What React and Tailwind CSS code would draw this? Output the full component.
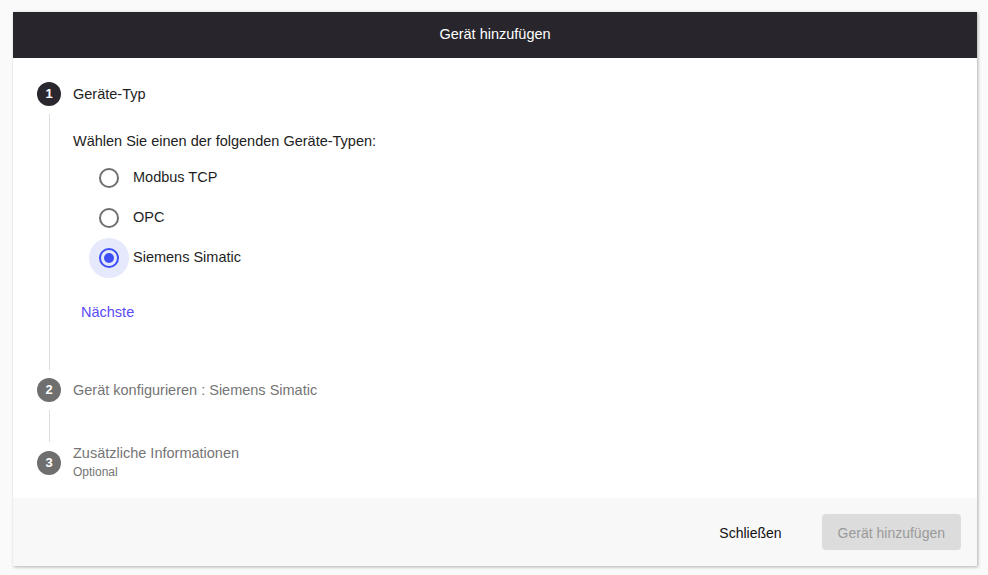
import { useState } from "react";

const deviceTypes = ["Modbus TCP", "OPC", "Siemens Simatic"];

function StepCircle({ n, active }) {
  return (
    <div
      className={`flex h-6 w-6 shrink-0 items-center justify-center rounded-full text-[13px] font-bold text-white ${
        active ? "bg-[#2a272e]" : "bg-[#6f6f6f]"
      }`}
    >
      {n}
    </div>
  );
}

function Radio({ label, checked, onSelect }) {
  return (
    <label className="flex h-10 cursor-pointer items-center" onClick={onSelect}>
      <span
        className={`flex h-10 w-10 items-center justify-center rounded-full ${
          checked ? "bg-[#e6e8fb]" : ""
        }`}
      >
        <span
          className={`flex h-5 w-5 items-center justify-center rounded-full border-2 ${
            checked ? "border-[#3d4ef5]" : "border-[#6f6f6f]"
          }`}
        >
          {checked && <span className="h-2.5 w-2.5 rounded-full bg-[#3d4ef5]" />}
        </span>
      </span>
      <span className="ml-1 text-[14.5px] text-[#1f1f1f]">{label}</span>
    </label>
  );
}

export default function App() {
  const [type, setType] = useState("Siemens Simatic");

  return (
    <div
      className="min-h-[575px] bg-[#fafafa] pl-[13px] pr-[11px] pt-3"
      style={{ fontFamily: '"Liberation Sans", Arial, sans-serif' }}
    >
      <div className="flex flex-col bg-white shadow-[1px_1px_3px_rgba(0,0,0,0.3)]">
        <div className="flex h-[46px] items-center justify-center bg-[#28262c] text-[14.5px] text-white">
          Gerät hinzufügen
        </div>

        <div className="px-6">
          {/* step 1 */}
          <div className="flex h-[72px] items-center gap-3">
            <StepCircle n={1} active />
            <span className="pt-0.5 text-[14.5px] text-[#222]">Geräte-Typ</span>
          </div>
          <div className="relative ml-3 pb-6 pl-6">
            <div className="absolute -bottom-4 -top-4 left-0 border-l border-[#dcdcdc]" />
            <p className="pt-px text-[14.5px] leading-5 text-[#222]">
              Wählen Sie einen der folgenden Geräte-Typen:
            </p>
            <div className="ml-4 mt-[7px] flex flex-col">
              {deviceTypes.map((t) => (
                <Radio key={t} label={t} checked={type === t} onSelect={() => setType(t)} />
              ))}
            </div>
            <button className="mt-4 h-9 rounded px-2 pt-0.5 text-[14.5px] text-[#5b4af7]">
              Nächste
            </button>
          </div>

          {/* step 2 */}
          <div className="flex h-[72px] items-center gap-3">
            <StepCircle n={2} />
            <span className="pt-0.5 text-[14.5px] text-[#757575]">
              Gerät konfigurieren : Siemens Simatic
            </span>
          </div>
          <div className="relative ml-3 h-px">
            <div className="absolute -top-4 bottom-[-15px] left-0 border-l border-[#dcdcdc]" />
          </div>

          {/* step 3 */}
          <div className="flex h-[71px] items-center gap-3">
            <StepCircle n={3} />
            <div className="flex flex-col">
              <span className="text-[14.5px] leading-[19px] text-[#757575]">
                Zusätzliche Informationen
              </span>
              <span className="text-[12px] leading-[19px] text-[#757575]">Optional</span>
            </div>
          </div>
        </div>

        <div className="flex h-[68px] items-center justify-end gap-6 bg-[#f8f8f8] pr-4">
          <button className="h-9 rounded px-4 pt-0.5 text-[14px] text-[#111]">Schließen</button>
          <button
            disabled
            className="h-9 rounded bg-[#dcdcdc] px-4 pt-0.5 text-[14px] text-[#9a9a9a]"
          >
            Gerät hinzufügen
          </button>
        </div>
      </div>
    </div>
  );
}
